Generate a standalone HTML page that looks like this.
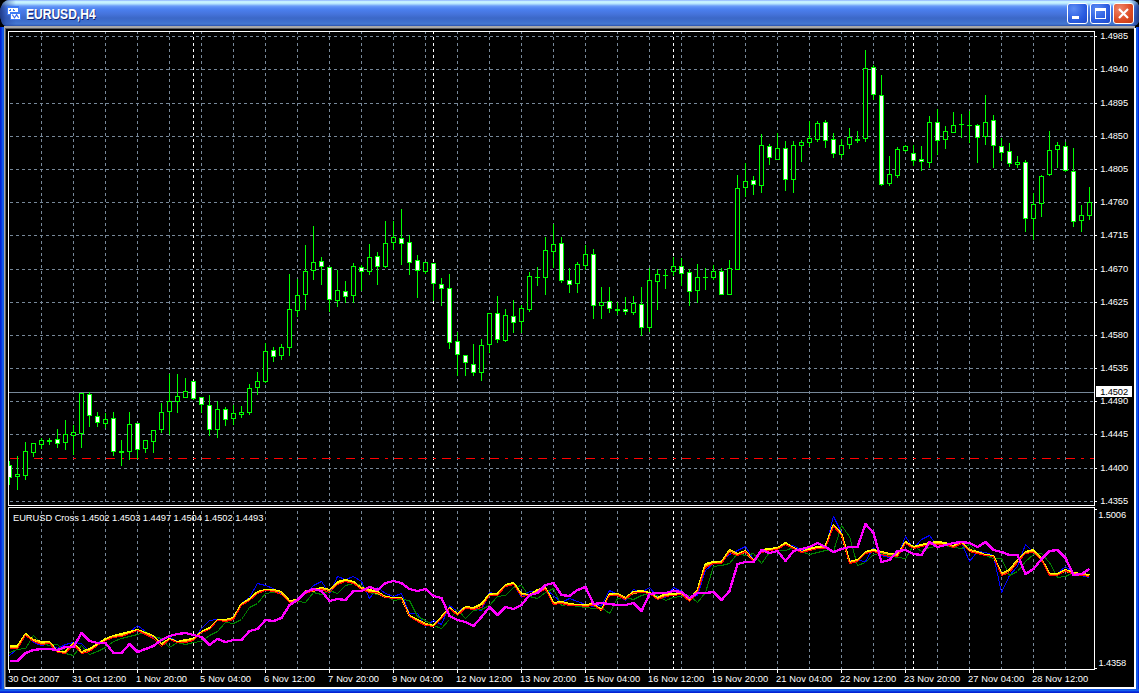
<!DOCTYPE html>
<html><head><meta charset="utf-8"><title>EURUSD,H4</title>
<style>
html,body{margin:0;padding:0;background:#000;}
body{width:1139px;height:693px;overflow:hidden;position:relative;font-family:"Liberation Sans",Arial,sans-serif;}
#win{position:absolute;left:0;top:0;width:1139px;height:693px;background:#000;overflow:hidden;}
#tb{position:absolute;left:0;top:0;width:1139px;height:26px;overflow:hidden;border-radius:9px 8px 6px 6px / 13px 8px 6px 13px;
 background:linear-gradient(to bottom,#8AAEFF 0px,#C4F0FF 1.5px,#C8F4FF 3px,#9CCCFC 4.5px,#6A9CF8 6px,#5388F2 8px,#4A7EEC 10px,#4674DC 14px,#3C68C8 18px,#3E6ECC 21px,#4478D2 24px,#3A66C0 25px,#2850A8 26px);}
#title{position:absolute;left:26px;top:6px;color:#fff;font-weight:bold;font-size:14px;line-height:16px;white-space:nowrap;
 text-shadow:1px 1px 0 #10206A;transform-origin:0 0;transform:scaleX(0.86);letter-spacing:0px;}
.bl{position:absolute;background:linear-gradient(to right,#0019CF,#0A38DE 40%,#166AEE 75%,#0A48DC);}
.btn{position:absolute;top:3px;width:21px;height:21px;border-radius:3px;box-sizing:border-box;border:1px solid #fff;
 background:radial-gradient(circle at 30% 25%,#5C8CF4,#2A5CE0 60%,#1E48C8);}
#bc{background:radial-gradient(circle at 30% 25%,#F0866A,#DC4A22 60%,#C03A14);}
</style></head><body>
<div id="win">
 <div id="tb"><div style="position:absolute;left:0;top:0;width:16px;height:26px;background:linear-gradient(to right,rgba(24,48,120,.85),rgba(36,70,160,.5) 6px,rgba(60,100,200,0) 16px)"></div><div style="position:absolute;right:0;top:0;width:10px;height:26px;background:linear-gradient(to left,rgba(24,48,120,.85),rgba(36,70,160,.4) 5px,rgba(60,100,200,0) 10px)"></div></div>
 <!-- frame borders -->
 <div class="bl" style="left:0;top:27px;width:4px;height:666px"></div>
 <div class="bl" style="left:1136px;top:27px;width:3px;height:666px;background:linear-gradient(to right,#0A48DC,#166AEE 40%,#0A38DE 70%,#0019CF)"></div>
 <div style="position:absolute;left:0;top:689px;width:1139px;height:4px;background:linear-gradient(to bottom,#0A48DC,#166AEE 30%,#0A38DE 60%,#0019CF)"></div>
 <!-- client edge -->
 <div style="position:absolute;left:4px;top:26px;width:1131px;height:2px;background:#A9A9A9"></div>
 <div style="position:absolute;left:5px;top:28px;width:1129px;height:1px;background:#5C5C5C"></div>
 <div style="position:absolute;left:4px;top:26px;width:1px;height:663px;background:#A9A9A9"></div>
 <div style="position:absolute;left:5px;top:28px;width:1px;height:660px;background:#5C5C5C"></div>
 <div style="position:absolute;left:1134px;top:28px;width:2px;height:661px;background:#FFFFFF"></div>
 <div style="position:absolute;left:5px;top:687px;width:1131px;height:2px;background:#FFFFFF"></div>
 <!-- icon -->
 <svg style="position:absolute;left:7px;top:6px" width="15" height="15" viewBox="0 0 15 15">
  <g shape-rendering="crispEdges">
  <rect x="0" y="0" width="12" height="9" fill="#3F7CF4"/>
  <rect x="1" y="2" width="10" height="6" fill="#FFFFFF"/>
  <rect x="2" y="4" width="2" height="1" fill="#3F7CF4"/><rect x="3" y="3" width="1" height="1" fill="#3F7CF4"/>
  <rect x="6" y="3" width="1" height="2" fill="#3F7CF4"/><rect x="7" y="4" width="1" height="1" fill="#3F7CF4"/>
  <rect x="3" y="6" width="11" height="8" fill="#3F7CF4"/>
  <rect x="4" y="8" width="9" height="5" fill="#FFFFFF"/>
  </g>
  <polyline points="5.3,8.6 7.5,11.8 9.6,8.6 11.6,11.8" fill="none" stroke="#3A6CF0" stroke-width="1.1"/>
 </svg>
 <div id="title">EURUSD,H4</div>
 <div class="btn" style="left:1067px"><div style="position:absolute;left:4px;top:12px;width:7px;height:3px;background:#fff"></div></div>
 <div class="btn" style="left:1090px"><div style="position:absolute;left:4px;top:4px;width:9px;height:7px;border:1px solid #fff;border-top-width:3px"></div></div>
 <div class="btn" id="bc" style="left:1113px"><svg width="19" height="19" viewBox="0 0 19 19" style="position:absolute;left:0;top:0"><path d="M5 5l9 9M14 5l-9 9" stroke="#fff" stroke-width="2.2" fill="none"/></svg></div>
 <svg style="position:absolute;left:0;top:0" width="1139" height="693" viewBox="0 0 1139 693">
<g shape-rendering="crispEdges" fill="none">
<line x1="41.5" y1="32" x2="41.5" y2="34" stroke="#778899"/><line x1="41.5" y1="37" x2="41.5" y2="505" stroke="#778899" stroke-dasharray="3 3"/>
<line x1="41.5" y1="511" x2="41.5" y2="669" stroke="#778899" stroke-dasharray="3 3"/>
<line x1="73.5" y1="32" x2="73.5" y2="34" stroke="#778899"/><line x1="73.5" y1="37" x2="73.5" y2="505" stroke="#778899" stroke-dasharray="3 3"/>
<line x1="73.5" y1="511" x2="73.5" y2="669" stroke="#778899" stroke-dasharray="3 3"/>
<line x1="105.5" y1="32" x2="105.5" y2="34" stroke="#778899"/><line x1="105.5" y1="37" x2="105.5" y2="505" stroke="#778899" stroke-dasharray="3 3"/>
<line x1="105.5" y1="511" x2="105.5" y2="669" stroke="#778899" stroke-dasharray="3 3"/>
<line x1="137.5" y1="32" x2="137.5" y2="34" stroke="#778899"/><line x1="137.5" y1="37" x2="137.5" y2="505" stroke="#778899" stroke-dasharray="3 3"/>
<line x1="137.5" y1="511" x2="137.5" y2="669" stroke="#778899" stroke-dasharray="3 3"/>
<line x1="169.5" y1="32" x2="169.5" y2="34" stroke="#778899"/><line x1="169.5" y1="37" x2="169.5" y2="505" stroke="#778899" stroke-dasharray="3 3"/>
<line x1="169.5" y1="511" x2="169.5" y2="669" stroke="#778899" stroke-dasharray="3 3"/>
<line x1="201.5" y1="32" x2="201.5" y2="34" stroke="#778899"/><line x1="201.5" y1="37" x2="201.5" y2="505" stroke="#778899" stroke-dasharray="3 3"/>
<line x1="201.5" y1="511" x2="201.5" y2="669" stroke="#778899" stroke-dasharray="3 3"/>
<line x1="233.5" y1="32" x2="233.5" y2="34" stroke="#778899"/><line x1="233.5" y1="37" x2="233.5" y2="505" stroke="#778899" stroke-dasharray="3 3"/>
<line x1="233.5" y1="511" x2="233.5" y2="669" stroke="#778899" stroke-dasharray="3 3"/>
<line x1="265.5" y1="32" x2="265.5" y2="34" stroke="#778899"/><line x1="265.5" y1="37" x2="265.5" y2="505" stroke="#778899" stroke-dasharray="3 3"/>
<line x1="265.5" y1="511" x2="265.5" y2="669" stroke="#778899" stroke-dasharray="3 3"/>
<line x1="297.5" y1="32" x2="297.5" y2="34" stroke="#778899"/><line x1="297.5" y1="37" x2="297.5" y2="505" stroke="#778899" stroke-dasharray="3 3"/>
<line x1="297.5" y1="511" x2="297.5" y2="669" stroke="#778899" stroke-dasharray="3 3"/>
<line x1="329.5" y1="32" x2="329.5" y2="34" stroke="#778899"/><line x1="329.5" y1="37" x2="329.5" y2="505" stroke="#778899" stroke-dasharray="3 3"/>
<line x1="329.5" y1="511" x2="329.5" y2="669" stroke="#778899" stroke-dasharray="3 3"/>
<line x1="361.5" y1="32" x2="361.5" y2="34" stroke="#778899"/><line x1="361.5" y1="37" x2="361.5" y2="505" stroke="#778899" stroke-dasharray="3 3"/>
<line x1="361.5" y1="511" x2="361.5" y2="669" stroke="#778899" stroke-dasharray="3 3"/>
<line x1="393.5" y1="32" x2="393.5" y2="34" stroke="#778899"/><line x1="393.5" y1="37" x2="393.5" y2="505" stroke="#778899" stroke-dasharray="3 3"/>
<line x1="393.5" y1="511" x2="393.5" y2="669" stroke="#778899" stroke-dasharray="3 3"/>
<line x1="425.5" y1="32" x2="425.5" y2="34" stroke="#778899"/><line x1="425.5" y1="37" x2="425.5" y2="505" stroke="#778899" stroke-dasharray="3 3"/>
<line x1="425.5" y1="511" x2="425.5" y2="669" stroke="#778899" stroke-dasharray="3 3"/>
<line x1="457.5" y1="32" x2="457.5" y2="34" stroke="#778899"/><line x1="457.5" y1="37" x2="457.5" y2="505" stroke="#778899" stroke-dasharray="3 3"/>
<line x1="457.5" y1="511" x2="457.5" y2="669" stroke="#778899" stroke-dasharray="3 3"/>
<line x1="489.5" y1="32" x2="489.5" y2="34" stroke="#778899"/><line x1="489.5" y1="37" x2="489.5" y2="505" stroke="#778899" stroke-dasharray="3 3"/>
<line x1="489.5" y1="511" x2="489.5" y2="669" stroke="#778899" stroke-dasharray="3 3"/>
<line x1="521.5" y1="32" x2="521.5" y2="34" stroke="#778899"/><line x1="521.5" y1="37" x2="521.5" y2="505" stroke="#778899" stroke-dasharray="3 3"/>
<line x1="521.5" y1="511" x2="521.5" y2="669" stroke="#778899" stroke-dasharray="3 3"/>
<line x1="553.5" y1="32" x2="553.5" y2="34" stroke="#778899"/><line x1="553.5" y1="37" x2="553.5" y2="505" stroke="#778899" stroke-dasharray="3 3"/>
<line x1="553.5" y1="511" x2="553.5" y2="669" stroke="#778899" stroke-dasharray="3 3"/>
<line x1="585.5" y1="32" x2="585.5" y2="34" stroke="#778899"/><line x1="585.5" y1="37" x2="585.5" y2="505" stroke="#778899" stroke-dasharray="3 3"/>
<line x1="585.5" y1="511" x2="585.5" y2="669" stroke="#778899" stroke-dasharray="3 3"/>
<line x1="617.5" y1="32" x2="617.5" y2="34" stroke="#778899"/><line x1="617.5" y1="37" x2="617.5" y2="505" stroke="#778899" stroke-dasharray="3 3"/>
<line x1="617.5" y1="511" x2="617.5" y2="669" stroke="#778899" stroke-dasharray="3 3"/>
<line x1="649.5" y1="32" x2="649.5" y2="34" stroke="#778899"/><line x1="649.5" y1="37" x2="649.5" y2="505" stroke="#778899" stroke-dasharray="3 3"/>
<line x1="649.5" y1="511" x2="649.5" y2="669" stroke="#778899" stroke-dasharray="3 3"/>
<line x1="681.5" y1="32" x2="681.5" y2="34" stroke="#778899"/><line x1="681.5" y1="37" x2="681.5" y2="505" stroke="#778899" stroke-dasharray="3 3"/>
<line x1="681.5" y1="511" x2="681.5" y2="669" stroke="#778899" stroke-dasharray="3 3"/>
<line x1="713.5" y1="32" x2="713.5" y2="34" stroke="#778899"/><line x1="713.5" y1="37" x2="713.5" y2="505" stroke="#778899" stroke-dasharray="3 3"/>
<line x1="713.5" y1="511" x2="713.5" y2="669" stroke="#778899" stroke-dasharray="3 3"/>
<line x1="745.5" y1="32" x2="745.5" y2="34" stroke="#778899"/><line x1="745.5" y1="37" x2="745.5" y2="505" stroke="#778899" stroke-dasharray="3 3"/>
<line x1="745.5" y1="511" x2="745.5" y2="669" stroke="#778899" stroke-dasharray="3 3"/>
<line x1="777.5" y1="32" x2="777.5" y2="34" stroke="#778899"/><line x1="777.5" y1="37" x2="777.5" y2="505" stroke="#778899" stroke-dasharray="3 3"/>
<line x1="777.5" y1="511" x2="777.5" y2="669" stroke="#778899" stroke-dasharray="3 3"/>
<line x1="809.5" y1="32" x2="809.5" y2="34" stroke="#778899"/><line x1="809.5" y1="37" x2="809.5" y2="505" stroke="#778899" stroke-dasharray="3 3"/>
<line x1="809.5" y1="511" x2="809.5" y2="669" stroke="#778899" stroke-dasharray="3 3"/>
<line x1="841.5" y1="32" x2="841.5" y2="34" stroke="#778899"/><line x1="841.5" y1="37" x2="841.5" y2="505" stroke="#778899" stroke-dasharray="3 3"/>
<line x1="841.5" y1="511" x2="841.5" y2="669" stroke="#778899" stroke-dasharray="3 3"/>
<line x1="873.5" y1="32" x2="873.5" y2="34" stroke="#778899"/><line x1="873.5" y1="37" x2="873.5" y2="505" stroke="#778899" stroke-dasharray="3 3"/>
<line x1="873.5" y1="511" x2="873.5" y2="669" stroke="#778899" stroke-dasharray="3 3"/>
<line x1="905.5" y1="32" x2="905.5" y2="34" stroke="#778899"/><line x1="905.5" y1="37" x2="905.5" y2="505" stroke="#778899" stroke-dasharray="3 3"/>
<line x1="905.5" y1="511" x2="905.5" y2="669" stroke="#778899" stroke-dasharray="3 3"/>
<line x1="937.5" y1="32" x2="937.5" y2="34" stroke="#778899"/><line x1="937.5" y1="37" x2="937.5" y2="505" stroke="#778899" stroke-dasharray="3 3"/>
<line x1="937.5" y1="511" x2="937.5" y2="669" stroke="#778899" stroke-dasharray="3 3"/>
<line x1="969.5" y1="32" x2="969.5" y2="34" stroke="#778899"/><line x1="969.5" y1="37" x2="969.5" y2="505" stroke="#778899" stroke-dasharray="3 3"/>
<line x1="969.5" y1="511" x2="969.5" y2="669" stroke="#778899" stroke-dasharray="3 3"/>
<line x1="1001.5" y1="32" x2="1001.5" y2="34" stroke="#778899"/><line x1="1001.5" y1="37" x2="1001.5" y2="505" stroke="#778899" stroke-dasharray="3 3"/>
<line x1="1001.5" y1="511" x2="1001.5" y2="669" stroke="#778899" stroke-dasharray="3 3"/>
<line x1="1033.5" y1="32" x2="1033.5" y2="34" stroke="#778899"/><line x1="1033.5" y1="37" x2="1033.5" y2="505" stroke="#778899" stroke-dasharray="3 3"/>
<line x1="1033.5" y1="511" x2="1033.5" y2="669" stroke="#778899" stroke-dasharray="3 3"/>
<line x1="1065.5" y1="32" x2="1065.5" y2="34" stroke="#778899"/><line x1="1065.5" y1="37" x2="1065.5" y2="505" stroke="#778899" stroke-dasharray="3 3"/>
<line x1="1065.5" y1="511" x2="1065.5" y2="669" stroke="#778899" stroke-dasharray="3 3"/>
<line x1="10" y1="36.5" x2="1094" y2="36.5" stroke="#778899" stroke-dasharray="3 3"/>
<line x1="10" y1="69.5" x2="1094" y2="69.5" stroke="#778899" stroke-dasharray="3 3"/>
<line x1="10" y1="103.5" x2="1094" y2="103.5" stroke="#778899" stroke-dasharray="3 3"/>
<line x1="10" y1="136.5" x2="1094" y2="136.5" stroke="#778899" stroke-dasharray="3 3"/>
<line x1="10" y1="169.5" x2="1094" y2="169.5" stroke="#778899" stroke-dasharray="3 3"/>
<line x1="10" y1="202.5" x2="1094" y2="202.5" stroke="#778899" stroke-dasharray="3 3"/>
<line x1="10" y1="235.5" x2="1094" y2="235.5" stroke="#778899" stroke-dasharray="3 3"/>
<line x1="10" y1="269.5" x2="1094" y2="269.5" stroke="#778899" stroke-dasharray="3 3"/>
<line x1="10" y1="302.5" x2="1094" y2="302.5" stroke="#778899" stroke-dasharray="3 3"/>
<line x1="10" y1="335.5" x2="1094" y2="335.5" stroke="#778899" stroke-dasharray="3 3"/>
<line x1="10" y1="368.5" x2="1094" y2="368.5" stroke="#778899" stroke-dasharray="3 3"/>
<line x1="10" y1="401.5" x2="1094" y2="401.5" stroke="#778899" stroke-dasharray="3 3"/>
<line x1="10" y1="434.5" x2="1094" y2="434.5" stroke="#778899" stroke-dasharray="3 3"/>
<line x1="10" y1="468.5" x2="1094" y2="468.5" stroke="#778899" stroke-dasharray="3 3"/>
<line x1="10" y1="501.5" x2="1094" y2="501.5" stroke="#778899" stroke-dasharray="3 3"/>
<line x1="193.5" y1="32" x2="193.5" y2="34" stroke="#FFFFFF"/><line x1="193.5" y1="37" x2="193.5" y2="505" stroke="#FFFFFF" stroke-dasharray="3 3"/>
<line x1="193.5" y1="511" x2="193.5" y2="669" stroke="#FFFFFF" stroke-dasharray="3 3"/>
<line x1="433.5" y1="32" x2="433.5" y2="34" stroke="#FFFFFF"/><line x1="433.5" y1="37" x2="433.5" y2="505" stroke="#FFFFFF" stroke-dasharray="3 3"/>
<line x1="433.5" y1="511" x2="433.5" y2="669" stroke="#FFFFFF" stroke-dasharray="3 3"/>
<line x1="673.5" y1="32" x2="673.5" y2="34" stroke="#FFFFFF"/><line x1="673.5" y1="37" x2="673.5" y2="505" stroke="#FFFFFF" stroke-dasharray="3 3"/>
<line x1="673.5" y1="511" x2="673.5" y2="669" stroke="#FFFFFF" stroke-dasharray="3 3"/>
<line x1="913.5" y1="32" x2="913.5" y2="34" stroke="#FFFFFF"/><line x1="913.5" y1="37" x2="913.5" y2="505" stroke="#FFFFFF" stroke-dasharray="3 3"/>
<line x1="913.5" y1="511" x2="913.5" y2="669" stroke="#FFFFFF" stroke-dasharray="3 3"/>
<line x1="10" y1="458.5" x2="1094" y2="458.5" stroke="#FF0000" stroke-dasharray="9 6 3 6"/>
<line x1="9" y1="392.5" x2="1094" y2="392.5" stroke="#778899"/>
<svg x="9" y="32" width="1085" height="473" viewBox="9 32 1085 473" overflow="hidden">
<line x1="9.5" y1="461" x2="9.5" y2="485" stroke="#00FF00"/>
<rect x="7.5" y="465.5" width="4" height="12" fill="#FFFFFF" stroke="#00FF00"/>
<line x1="17.5" y1="456" x2="17.5" y2="490" stroke="#00FF00"/>
<rect x="15.5" y="474.5" width="4" height="2" fill="#000000" stroke="#00FF00"/>
<line x1="25.5" y1="442" x2="25.5" y2="480" stroke="#00FF00"/>
<rect x="23.5" y="451.5" width="4" height="24" fill="#000000" stroke="#00FF00"/>
<line x1="33.5" y1="443" x2="33.5" y2="457" stroke="#00FF00"/>
<rect x="31.5" y="443.5" width="4" height="9" fill="#000000" stroke="#00FF00"/>
<line x1="41.5" y1="438" x2="41.5" y2="449" stroke="#00FF00"/>
<rect x="39.5" y="440.5" width="4" height="4" fill="#000000" stroke="#00FF00"/>
<line x1="49.5" y1="438" x2="49.5" y2="445" stroke="#00FF00"/>
<rect x="47" y="440" width="5" height="2" fill="#00FF00" stroke="none"/>
<line x1="57.5" y1="429" x2="57.5" y2="448" stroke="#00FF00"/>
<rect x="55.5" y="439.5" width="4" height="4" fill="#FFFFFF" stroke="#00FF00"/>
<line x1="65.5" y1="420" x2="65.5" y2="450" stroke="#00FF00"/>
<rect x="63.5" y="434.5" width="4" height="8" fill="#000000" stroke="#00FF00"/>
<line x1="73.5" y1="425" x2="73.5" y2="455" stroke="#00FF00"/>
<rect x="71.5" y="432.5" width="4" height="3" fill="#000000" stroke="#00FF00"/>
<line x1="81.5" y1="393" x2="81.5" y2="448" stroke="#00FF00"/>
<rect x="79.5" y="393.5" width="4" height="40" fill="#000000" stroke="#00FF00"/>
<line x1="89.5" y1="392" x2="89.5" y2="427" stroke="#00FF00"/>
<rect x="87.5" y="394.5" width="4" height="21" fill="#FFFFFF" stroke="#00FF00"/>
<line x1="97.5" y1="412" x2="97.5" y2="427" stroke="#00FF00"/>
<rect x="95.5" y="416.5" width="4" height="6" fill="#FFFFFF" stroke="#00FF00"/>
<line x1="105.5" y1="413" x2="105.5" y2="428" stroke="#00FF00"/>
<rect x="103.5" y="419.5" width="4" height="4" fill="#000000" stroke="#00FF00"/>
<line x1="113.5" y1="412" x2="113.5" y2="456" stroke="#00FF00"/>
<rect x="111.5" y="418.5" width="4" height="33" fill="#FFFFFF" stroke="#00FF00"/>
<line x1="121.5" y1="440" x2="121.5" y2="466" stroke="#00FF00"/>
<rect x="119" y="451" width="5" height="2" fill="#00FF00" stroke="none"/>
<line x1="129.5" y1="412" x2="129.5" y2="460" stroke="#00FF00"/>
<rect x="127.5" y="424.5" width="4" height="27" fill="#000000" stroke="#00FF00"/>
<line x1="137.5" y1="423" x2="137.5" y2="459" stroke="#00FF00"/>
<rect x="135.5" y="423.5" width="4" height="26" fill="#FFFFFF" stroke="#00FF00"/>
<line x1="145.5" y1="440" x2="145.5" y2="453" stroke="#00FF00"/>
<rect x="143.5" y="440.5" width="4" height="8" fill="#000000" stroke="#00FF00"/>
<line x1="153.5" y1="430" x2="153.5" y2="453" stroke="#00FF00"/>
<rect x="151.5" y="430.5" width="4" height="11" fill="#000000" stroke="#00FF00"/>
<line x1="161.5" y1="403" x2="161.5" y2="433" stroke="#00FF00"/>
<rect x="159.5" y="412.5" width="4" height="17" fill="#000000" stroke="#00FF00"/>
<line x1="169.5" y1="374" x2="169.5" y2="435" stroke="#00FF00"/>
<rect x="167.5" y="401.5" width="4" height="10" fill="#000000" stroke="#00FF00"/>
<line x1="177.5" y1="374" x2="177.5" y2="413" stroke="#00FF00"/>
<rect x="175.5" y="396.5" width="4" height="5" fill="#000000" stroke="#00FF00"/>
<line x1="185.5" y1="378" x2="185.5" y2="398" stroke="#00FF00"/>
<rect x="183.5" y="391.5" width="4" height="6" fill="#000000" stroke="#00FF00"/>
<line x1="193.5" y1="381" x2="193.5" y2="400" stroke="#00FF00"/>
<rect x="191.5" y="381.5" width="4" height="17" fill="#FFFFFF" stroke="#00FF00"/>
<line x1="201.5" y1="397" x2="201.5" y2="413" stroke="#00FF00"/>
<rect x="199.5" y="397.5" width="4" height="7" fill="#FFFFFF" stroke="#00FF00"/>
<line x1="209.5" y1="395" x2="209.5" y2="436" stroke="#00FF00"/>
<rect x="207.5" y="405.5" width="4" height="24" fill="#FFFFFF" stroke="#00FF00"/>
<line x1="217.5" y1="401" x2="217.5" y2="438" stroke="#00FF00"/>
<rect x="215.5" y="409.5" width="4" height="20" fill="#000000" stroke="#00FF00"/>
<line x1="225.5" y1="407" x2="225.5" y2="426" stroke="#00FF00"/>
<rect x="223.5" y="409.5" width="4" height="10" fill="#FFFFFF" stroke="#00FF00"/>
<line x1="233.5" y1="405" x2="233.5" y2="425" stroke="#00FF00"/>
<rect x="231.5" y="413.5" width="4" height="5" fill="#000000" stroke="#00FF00"/>
<line x1="241.5" y1="406" x2="241.5" y2="418" stroke="#00FF00"/>
<rect x="239.5" y="412.5" width="4" height="2" fill="#000000" stroke="#00FF00"/>
<line x1="249.5" y1="384" x2="249.5" y2="415" stroke="#00FF00"/>
<rect x="247.5" y="388.5" width="4" height="24" fill="#000000" stroke="#00FF00"/>
<line x1="257.5" y1="372" x2="257.5" y2="395" stroke="#00FF00"/>
<rect x="255.5" y="381.5" width="4" height="6" fill="#000000" stroke="#00FF00"/>
<line x1="265.5" y1="343" x2="265.5" y2="383" stroke="#00FF00"/>
<rect x="263.5" y="351.5" width="4" height="30" fill="#000000" stroke="#00FF00"/>
<line x1="273.5" y1="347" x2="273.5" y2="362" stroke="#00FF00"/>
<rect x="271.5" y="350.5" width="4" height="6" fill="#FFFFFF" stroke="#00FF00"/>
<line x1="281.5" y1="344" x2="281.5" y2="360" stroke="#00FF00"/>
<rect x="279.5" y="347.5" width="4" height="8" fill="#000000" stroke="#00FF00"/>
<line x1="289.5" y1="274" x2="289.5" y2="356" stroke="#00FF00"/>
<rect x="287.5" y="309.5" width="4" height="38" fill="#000000" stroke="#00FF00"/>
<line x1="297.5" y1="279" x2="297.5" y2="317" stroke="#00FF00"/>
<rect x="295.5" y="295.5" width="4" height="15" fill="#000000" stroke="#00FF00"/>
<line x1="305.5" y1="245" x2="305.5" y2="310" stroke="#00FF00"/>
<rect x="303.5" y="271.5" width="4" height="23" fill="#000000" stroke="#00FF00"/>
<line x1="313.5" y1="226" x2="313.5" y2="280" stroke="#00FF00"/>
<rect x="311.5" y="262.5" width="4" height="8" fill="#000000" stroke="#00FF00"/>
<line x1="321.5" y1="257" x2="321.5" y2="285" stroke="#00FF00"/>
<rect x="319.5" y="261.5" width="4" height="5" fill="#FFFFFF" stroke="#00FF00"/>
<line x1="329.5" y1="267" x2="329.5" y2="312" stroke="#00FF00"/>
<rect x="327.5" y="267.5" width="4" height="32" fill="#FFFFFF" stroke="#00FF00"/>
<line x1="337.5" y1="270" x2="337.5" y2="307" stroke="#00FF00"/>
<rect x="335.5" y="290.5" width="4" height="10" fill="#000000" stroke="#00FF00"/>
<line x1="345.5" y1="281" x2="345.5" y2="303" stroke="#00FF00"/>
<rect x="343.5" y="291.5" width="4" height="5" fill="#FFFFFF" stroke="#00FF00"/>
<line x1="353.5" y1="263" x2="353.5" y2="303" stroke="#00FF00"/>
<rect x="351.5" y="266.5" width="4" height="29" fill="#000000" stroke="#00FF00"/>
<line x1="361.5" y1="265" x2="361.5" y2="291" stroke="#00FF00"/>
<rect x="359.5" y="267.5" width="4" height="4" fill="#FFFFFF" stroke="#00FF00"/>
<line x1="369.5" y1="244" x2="369.5" y2="275" stroke="#00FF00"/>
<rect x="367.5" y="257.5" width="4" height="14" fill="#000000" stroke="#00FF00"/>
<line x1="377.5" y1="252" x2="377.5" y2="285" stroke="#00FF00"/>
<rect x="375.5" y="256.5" width="4" height="10" fill="#FFFFFF" stroke="#00FF00"/>
<line x1="385.5" y1="221" x2="385.5" y2="268" stroke="#00FF00"/>
<rect x="383.5" y="243.5" width="4" height="23" fill="#000000" stroke="#00FF00"/>
<line x1="393.5" y1="221" x2="393.5" y2="250" stroke="#00FF00"/>
<rect x="391.5" y="237.5" width="4" height="5" fill="#000000" stroke="#00FF00"/>
<line x1="401.5" y1="209" x2="401.5" y2="265" stroke="#00FF00"/>
<rect x="399.5" y="238.5" width="4" height="5" fill="#FFFFFF" stroke="#00FF00"/>
<line x1="409.5" y1="235" x2="409.5" y2="275" stroke="#00FF00"/>
<rect x="407.5" y="242.5" width="4" height="20" fill="#FFFFFF" stroke="#00FF00"/>
<line x1="417.5" y1="255" x2="417.5" y2="298" stroke="#00FF00"/>
<rect x="415.5" y="260.5" width="4" height="10" fill="#FFFFFF" stroke="#00FF00"/>
<line x1="425.5" y1="262" x2="425.5" y2="274" stroke="#00FF00"/>
<rect x="423.5" y="262.5" width="4" height="9" fill="#000000" stroke="#00FF00"/>
<line x1="433.5" y1="263" x2="433.5" y2="301" stroke="#00FF00"/>
<rect x="431.5" y="263.5" width="4" height="20" fill="#FFFFFF" stroke="#00FF00"/>
<line x1="441.5" y1="278" x2="441.5" y2="306" stroke="#00FF00"/>
<rect x="439.5" y="284.5" width="4" height="4" fill="#FFFFFF" stroke="#00FF00"/>
<line x1="449.5" y1="274" x2="449.5" y2="349" stroke="#00FF00"/>
<rect x="447.5" y="288.5" width="4" height="54" fill="#FFFFFF" stroke="#00FF00"/>
<line x1="457.5" y1="332" x2="457.5" y2="376" stroke="#00FF00"/>
<rect x="455.5" y="341.5" width="4" height="13" fill="#FFFFFF" stroke="#00FF00"/>
<line x1="465.5" y1="355" x2="465.5" y2="376" stroke="#00FF00"/>
<rect x="463.5" y="355.5" width="4" height="7" fill="#FFFFFF" stroke="#00FF00"/>
<line x1="473.5" y1="344" x2="473.5" y2="376" stroke="#00FF00"/>
<rect x="471.5" y="364.5" width="4" height="8" fill="#FFFFFF" stroke="#00FF00"/>
<line x1="481.5" y1="339" x2="481.5" y2="381" stroke="#00FF00"/>
<rect x="479.5" y="345.5" width="4" height="27" fill="#000000" stroke="#00FF00"/>
<line x1="489.5" y1="313" x2="489.5" y2="353" stroke="#00FF00"/>
<rect x="487.5" y="313.5" width="4" height="31" fill="#000000" stroke="#00FF00"/>
<line x1="497.5" y1="296" x2="497.5" y2="343" stroke="#00FF00"/>
<rect x="495.5" y="313.5" width="4" height="26" fill="#FFFFFF" stroke="#00FF00"/>
<line x1="505.5" y1="309" x2="505.5" y2="342" stroke="#00FF00"/>
<rect x="503.5" y="315.5" width="4" height="25" fill="#000000" stroke="#00FF00"/>
<line x1="513.5" y1="300" x2="513.5" y2="333" stroke="#00FF00"/>
<rect x="511.5" y="316.5" width="4" height="6" fill="#FFFFFF" stroke="#00FF00"/>
<line x1="521.5" y1="305" x2="521.5" y2="333" stroke="#00FF00"/>
<rect x="519.5" y="308.5" width="4" height="13" fill="#000000" stroke="#00FF00"/>
<line x1="529.5" y1="272" x2="529.5" y2="312" stroke="#00FF00"/>
<rect x="527.5" y="276.5" width="4" height="33" fill="#000000" stroke="#00FF00"/>
<line x1="537.5" y1="267" x2="537.5" y2="286" stroke="#00FF00"/>
<line x1="535" y1="277.5" x2="540" y2="277.5" stroke="#00FF00"/>
<line x1="545.5" y1="237" x2="545.5" y2="295" stroke="#00FF00"/>
<rect x="543.5" y="250.5" width="4" height="27" fill="#000000" stroke="#00FF00"/>
<line x1="553.5" y1="224" x2="553.5" y2="268" stroke="#00FF00"/>
<rect x="551.5" y="244.5" width="4" height="7" fill="#000000" stroke="#00FF00"/>
<line x1="561.5" y1="237" x2="561.5" y2="283" stroke="#00FF00"/>
<rect x="559.5" y="243.5" width="4" height="37" fill="#FFFFFF" stroke="#00FF00"/>
<line x1="569.5" y1="268" x2="569.5" y2="293" stroke="#00FF00"/>
<rect x="567.5" y="280.5" width="4" height="4" fill="#FFFFFF" stroke="#00FF00"/>
<line x1="577.5" y1="262" x2="577.5" y2="293" stroke="#00FF00"/>
<rect x="575.5" y="264.5" width="4" height="19" fill="#000000" stroke="#00FF00"/>
<line x1="585.5" y1="245" x2="585.5" y2="270" stroke="#00FF00"/>
<rect x="583.5" y="254.5" width="4" height="11" fill="#000000" stroke="#00FF00"/>
<line x1="593.5" y1="249" x2="593.5" y2="319" stroke="#00FF00"/>
<rect x="591.5" y="254.5" width="4" height="51" fill="#FFFFFF" stroke="#00FF00"/>
<line x1="601.5" y1="287" x2="601.5" y2="319" stroke="#00FF00"/>
<rect x="599.5" y="302.5" width="4" height="3" fill="#000000" stroke="#00FF00"/>
<line x1="609.5" y1="287" x2="609.5" y2="313" stroke="#00FF00"/>
<rect x="607.5" y="301.5" width="4" height="7" fill="#FFFFFF" stroke="#00FF00"/>
<line x1="617.5" y1="302" x2="617.5" y2="315" stroke="#00FF00"/>
<rect x="615" y="309" width="5" height="2" fill="#00FF00" stroke="none"/>
<line x1="625.5" y1="297" x2="625.5" y2="315" stroke="#00FF00"/>
<rect x="623.5" y="309.5" width="4" height="2" fill="#FFFFFF" stroke="#00FF00"/>
<line x1="633.5" y1="296" x2="633.5" y2="315" stroke="#00FF00"/>
<rect x="631.5" y="303.5" width="4" height="9" fill="#000000" stroke="#00FF00"/>
<line x1="641.5" y1="287" x2="641.5" y2="336" stroke="#00FF00"/>
<rect x="639.5" y="304.5" width="4" height="23" fill="#FFFFFF" stroke="#00FF00"/>
<line x1="649.5" y1="268" x2="649.5" y2="332" stroke="#00FF00"/>
<rect x="647.5" y="280.5" width="4" height="47" fill="#000000" stroke="#00FF00"/>
<line x1="657.5" y1="269" x2="657.5" y2="310" stroke="#00FF00"/>
<rect x="655.5" y="274.5" width="4" height="7" fill="#000000" stroke="#00FF00"/>
<line x1="665.5" y1="269" x2="665.5" y2="289" stroke="#00FF00"/>
<line x1="663" y1="275.5" x2="668" y2="275.5" stroke="#00FF00"/>
<line x1="673.5" y1="257" x2="673.5" y2="276" stroke="#00FF00"/>
<rect x="671.5" y="266.5" width="4" height="5" fill="#000000" stroke="#00FF00"/>
<line x1="681.5" y1="258" x2="681.5" y2="286" stroke="#00FF00"/>
<rect x="679.5" y="266.5" width="4" height="7" fill="#FFFFFF" stroke="#00FF00"/>
<line x1="689.5" y1="269" x2="689.5" y2="306" stroke="#00FF00"/>
<rect x="687.5" y="272.5" width="4" height="19" fill="#FFFFFF" stroke="#00FF00"/>
<line x1="697.5" y1="264" x2="697.5" y2="303" stroke="#00FF00"/>
<rect x="695.5" y="277.5" width="4" height="13" fill="#000000" stroke="#00FF00"/>
<line x1="705.5" y1="268" x2="705.5" y2="290" stroke="#00FF00"/>
<line x1="703" y1="277.5" x2="708" y2="277.5" stroke="#00FF00"/>
<line x1="713.5" y1="265" x2="713.5" y2="280" stroke="#00FF00"/>
<rect x="711.5" y="271.5" width="4" height="6" fill="#000000" stroke="#00FF00"/>
<line x1="721.5" y1="268" x2="721.5" y2="295" stroke="#00FF00"/>
<rect x="719.5" y="271.5" width="4" height="23" fill="#FFFFFF" stroke="#00FF00"/>
<line x1="729.5" y1="260" x2="729.5" y2="295" stroke="#00FF00"/>
<rect x="727.5" y="268.5" width="4" height="26" fill="#000000" stroke="#00FF00"/>
<line x1="737.5" y1="175" x2="737.5" y2="270" stroke="#00FF00"/>
<rect x="735.5" y="188.5" width="4" height="81" fill="#000000" stroke="#00FF00"/>
<line x1="745.5" y1="163" x2="745.5" y2="197" stroke="#00FF00"/>
<rect x="743.5" y="181.5" width="4" height="6" fill="#000000" stroke="#00FF00"/>
<line x1="753.5" y1="176" x2="753.5" y2="195" stroke="#00FF00"/>
<rect x="751.5" y="180.5" width="4" height="4" fill="#FFFFFF" stroke="#00FF00"/>
<line x1="761.5" y1="134" x2="761.5" y2="193" stroke="#00FF00"/>
<rect x="759.5" y="145.5" width="4" height="40" fill="#000000" stroke="#00FF00"/>
<line x1="769.5" y1="144" x2="769.5" y2="165" stroke="#00FF00"/>
<rect x="767.5" y="146.5" width="4" height="11" fill="#FFFFFF" stroke="#00FF00"/>
<line x1="777.5" y1="133" x2="777.5" y2="160" stroke="#00FF00"/>
<rect x="775.5" y="148.5" width="4" height="11" fill="#000000" stroke="#00FF00"/>
<line x1="785.5" y1="141" x2="785.5" y2="191" stroke="#00FF00"/>
<rect x="783.5" y="148.5" width="4" height="31" fill="#FFFFFF" stroke="#00FF00"/>
<line x1="793.5" y1="141" x2="793.5" y2="193" stroke="#00FF00"/>
<rect x="791.5" y="145.5" width="4" height="34" fill="#000000" stroke="#00FF00"/>
<line x1="801.5" y1="140" x2="801.5" y2="162" stroke="#00FF00"/>
<rect x="799.5" y="142.5" width="4" height="3" fill="#000000" stroke="#00FF00"/>
<line x1="809.5" y1="121" x2="809.5" y2="147" stroke="#00FF00"/>
<rect x="807.5" y="138.5" width="4" height="4" fill="#000000" stroke="#00FF00"/>
<line x1="817.5" y1="121" x2="817.5" y2="142" stroke="#00FF00"/>
<rect x="815.5" y="123.5" width="4" height="16" fill="#000000" stroke="#00FF00"/>
<line x1="825.5" y1="120" x2="825.5" y2="148" stroke="#00FF00"/>
<rect x="823.5" y="122.5" width="4" height="18" fill="#FFFFFF" stroke="#00FF00"/>
<line x1="833.5" y1="133" x2="833.5" y2="158" stroke="#00FF00"/>
<rect x="831.5" y="139.5" width="4" height="14" fill="#FFFFFF" stroke="#00FF00"/>
<line x1="841.5" y1="139" x2="841.5" y2="158" stroke="#00FF00"/>
<rect x="839.5" y="145.5" width="4" height="9" fill="#000000" stroke="#00FF00"/>
<line x1="849.5" y1="128" x2="849.5" y2="149" stroke="#00FF00"/>
<rect x="847.5" y="137.5" width="4" height="7" fill="#000000" stroke="#00FF00"/>
<line x1="857.5" y1="131" x2="857.5" y2="143" stroke="#00FF00"/>
<rect x="855" y="139" width="5" height="2" fill="#00FF00" stroke="none"/>
<line x1="865.5" y1="50" x2="865.5" y2="142" stroke="#00FF00"/>
<rect x="863.5" y="68.5" width="4" height="70" fill="#000000" stroke="#00FF00"/>
<line x1="873.5" y1="65" x2="873.5" y2="100" stroke="#00FF00"/>
<rect x="871.5" y="67.5" width="4" height="27" fill="#FFFFFF" stroke="#00FF00"/>
<line x1="881.5" y1="75" x2="881.5" y2="186" stroke="#00FF00"/>
<rect x="879.5" y="95.5" width="4" height="89" fill="#FFFFFF" stroke="#00FF00"/>
<line x1="889.5" y1="156" x2="889.5" y2="186" stroke="#00FF00"/>
<rect x="887.5" y="174.5" width="4" height="9" fill="#000000" stroke="#00FF00"/>
<line x1="897.5" y1="147" x2="897.5" y2="178" stroke="#00FF00"/>
<rect x="895.5" y="149.5" width="4" height="26" fill="#000000" stroke="#00FF00"/>
<line x1="905.5" y1="145" x2="905.5" y2="152" stroke="#00FF00"/>
<rect x="903.5" y="146.5" width="4" height="4" fill="#000000" stroke="#00FF00"/>
<line x1="913.5" y1="145" x2="913.5" y2="166" stroke="#00FF00"/>
<rect x="911.5" y="153.5" width="4" height="7" fill="#FFFFFF" stroke="#00FF00"/>
<line x1="921.5" y1="146" x2="921.5" y2="171" stroke="#00FF00"/>
<rect x="919.5" y="159.5" width="4" height="2" fill="#FFFFFF" stroke="#00FF00"/>
<line x1="929.5" y1="116" x2="929.5" y2="168" stroke="#00FF00"/>
<rect x="927.5" y="122.5" width="4" height="40" fill="#000000" stroke="#00FF00"/>
<line x1="937.5" y1="109" x2="937.5" y2="155" stroke="#00FF00"/>
<rect x="935.5" y="122.5" width="4" height="18" fill="#FFFFFF" stroke="#00FF00"/>
<line x1="945.5" y1="126" x2="945.5" y2="149" stroke="#00FF00"/>
<rect x="943.5" y="131.5" width="4" height="8" fill="#000000" stroke="#00FF00"/>
<line x1="953.5" y1="112" x2="953.5" y2="133" stroke="#00FF00"/>
<rect x="951.5" y="125.5" width="4" height="7" fill="#000000" stroke="#00FF00"/>
<line x1="961.5" y1="114" x2="961.5" y2="138" stroke="#00FF00"/>
<line x1="959" y1="124.5" x2="964" y2="124.5" stroke="#00FF00"/>
<line x1="969.5" y1="111" x2="969.5" y2="143" stroke="#00FF00"/>
<line x1="967" y1="125.5" x2="972" y2="125.5" stroke="#00FF00"/>
<line x1="977.5" y1="124" x2="977.5" y2="163" stroke="#00FF00"/>
<rect x="975.5" y="125.5" width="4" height="12" fill="#FFFFFF" stroke="#00FF00"/>
<line x1="985.5" y1="95" x2="985.5" y2="145" stroke="#00FF00"/>
<rect x="983.5" y="122.5" width="4" height="14" fill="#000000" stroke="#00FF00"/>
<line x1="993.5" y1="115" x2="993.5" y2="168" stroke="#00FF00"/>
<rect x="991.5" y="120.5" width="4" height="25" fill="#FFFFFF" stroke="#00FF00"/>
<line x1="1001.5" y1="138" x2="1001.5" y2="161" stroke="#00FF00"/>
<rect x="999.5" y="146.5" width="4" height="6" fill="#FFFFFF" stroke="#00FF00"/>
<line x1="1009.5" y1="143" x2="1009.5" y2="167" stroke="#00FF00"/>
<rect x="1007.5" y="151.5" width="4" height="12" fill="#FFFFFF" stroke="#00FF00"/>
<line x1="1017.5" y1="156" x2="1017.5" y2="168" stroke="#00FF00"/>
<rect x="1015.5" y="162.5" width="4" height="2" fill="#000000" stroke="#00FF00"/>
<line x1="1025.5" y1="160" x2="1025.5" y2="232" stroke="#00FF00"/>
<rect x="1023.5" y="162.5" width="4" height="56" fill="#FFFFFF" stroke="#00FF00"/>
<line x1="1033.5" y1="193" x2="1033.5" y2="240" stroke="#00FF00"/>
<rect x="1031.5" y="204.5" width="4" height="14" fill="#000000" stroke="#00FF00"/>
<line x1="1041.5" y1="175" x2="1041.5" y2="217" stroke="#00FF00"/>
<rect x="1039.5" y="176.5" width="4" height="27" fill="#000000" stroke="#00FF00"/>
<line x1="1049.5" y1="131" x2="1049.5" y2="176" stroke="#00FF00"/>
<rect x="1047.5" y="150.5" width="4" height="24" fill="#000000" stroke="#00FF00"/>
<line x1="1057.5" y1="142" x2="1057.5" y2="168" stroke="#00FF00"/>
<rect x="1055.5" y="145.5" width="4" height="4" fill="#000000" stroke="#00FF00"/>
<line x1="1065.5" y1="142" x2="1065.5" y2="172" stroke="#00FF00"/>
<rect x="1063.5" y="146.5" width="4" height="24" fill="#FFFFFF" stroke="#00FF00"/>
<line x1="1073.5" y1="148" x2="1073.5" y2="227" stroke="#00FF00"/>
<rect x="1071.5" y="171.5" width="4" height="50" fill="#FFFFFF" stroke="#00FF00"/>
<line x1="1081.5" y1="205" x2="1081.5" y2="232" stroke="#00FF00"/>
<rect x="1079.5" y="215.5" width="4" height="5" fill="#000000" stroke="#00FF00"/>
<line x1="1089.5" y1="187" x2="1089.5" y2="220" stroke="#00FF00"/>
<rect x="1087.5" y="202.5" width="4" height="13" fill="#000000" stroke="#00FF00"/>
</svg>
</g>
<svg x="9" y="508" width="1085" height="161" viewBox="9 508 1085 161" overflow="hidden">
<polyline points="9.5,655.5 17.5,648.5 25.5,634.5 33.5,642.5 41.5,645.5 49.5,643.5 57.5,648.5 65.5,644.5 73.5,642.5 81.5,643.5 89.5,651.5 97.5,642.5 105.5,640.5 113.5,637.5 121.5,635.5 129.5,632.5 137.5,625.5 145.5,631.5 153.5,637.5 161.5,638.5 169.5,637.5 177.5,641.5 185.5,642.5 193.5,639.5 201.5,628.5 209.5,620.5 217.5,619.5 225.5,621.5 233.5,619.5 241.5,603.5 249.5,597.5 257.5,583.5 265.5,585.5 273.5,588.5 281.5,594.5 289.5,600.5 297.5,600.5 305.5,593.5 313.5,585.5 321.5,581.5 329.5,593.5 337.5,576.5 345.5,579.5 353.5,576.5 361.5,581.5 369.5,598.5 377.5,587.5 385.5,593.5 393.5,596.5 401.5,593.5 409.5,613.5 417.5,613.5 425.5,626.5 433.5,620.5 441.5,624.5 449.5,605.5 457.5,611.5 465.5,606.5 473.5,608.5 481.5,610.5 489.5,592.5 497.5,594.5 505.5,585.5 513.5,583.5 521.5,597.5 529.5,591.5 537.5,592.5 545.5,588.5 553.5,595.5 561.5,602.5 569.5,598.5 577.5,601.5 585.5,604.5 593.5,606.5 601.5,605.5 609.5,590.5 617.5,594.5 625.5,600.5 633.5,589.5 641.5,592.5 649.5,587.5 657.5,596.5 665.5,597.5 673.5,587.5 681.5,591.5 689.5,598.5 697.5,595.5 705.5,570.5 713.5,563.5 721.5,560.5 729.5,554.5 737.5,550.5 745.5,546.5 753.5,559.5 761.5,552.5 769.5,550.5 777.5,547.5 785.5,544.5 793.5,545.5 801.5,550.5 809.5,548.5 817.5,547.5 825.5,547.5 833.5,516.5 841.5,532.5 849.5,560.5 857.5,560.5 865.5,561.5 873.5,547.5 881.5,555.5 889.5,557.5 897.5,556.5 905.5,536.5 913.5,548.5 921.5,539.5 929.5,535.5 937.5,546.5 945.5,544.5 953.5,546.5 961.5,542.5 969.5,561.5 977.5,551.5 985.5,552.5 993.5,555.5 1001.5,592.5 1009.5,575.5 1017.5,566.5 1025.5,544.5 1033.5,552.5 1041.5,560.5 1049.5,573.5 1057.5,573.5 1065.5,566.5 1073.5,573.5 1081.5,575.5 1089.5,577.5" fill="none" stroke="#0000FF" stroke-width="1" stroke-linejoin="round" shape-rendering="crispEdges"/>
<polyline points="9.5,652.5 17.5,649.5 25.5,648.5 33.5,635.5 41.5,643.5 49.5,645.5 57.5,644.5 65.5,653.5 73.5,655.5 81.5,645.5 89.5,654.5 97.5,651.5 105.5,647.5 113.5,641.5 121.5,638.5 129.5,636.5 137.5,634.5 145.5,631.5 153.5,636.5 161.5,638.5 169.5,647.5 177.5,642.5 185.5,644.5 193.5,642.5 201.5,641.5 209.5,635.5 217.5,631.5 225.5,622.5 233.5,623.5 241.5,619.5 249.5,607.5 257.5,603.5 265.5,593.5 273.5,592.5 281.5,591.5 289.5,602.5 297.5,601.5 305.5,602.5 313.5,592.5 321.5,594.5 329.5,590.5 337.5,593.5 345.5,585.5 353.5,583.5 361.5,585.5 369.5,592.5 377.5,594.5 385.5,595.5 393.5,600.5 401.5,599.5 409.5,600.5 417.5,616.5 425.5,620.5 433.5,625.5 441.5,628.5 449.5,619.5 457.5,609.5 465.5,618.5 473.5,610.5 481.5,609.5 489.5,605.5 497.5,596.5 505.5,595.5 513.5,587.5 521.5,585.5 529.5,596.5 537.5,598.5 545.5,592.5 553.5,588.5 561.5,605.5 569.5,604.5 577.5,606.5 585.5,607.5 593.5,608.5 601.5,607.5 609.5,613.5 617.5,598.5 625.5,597.5 633.5,599.5 641.5,595.5 649.5,593.5 657.5,595.5 665.5,600.5 673.5,597.5 681.5,596.5 689.5,595.5 697.5,602.5 705.5,592.5 713.5,566.5 721.5,565.5 729.5,563.5 737.5,553.5 745.5,555.5 753.5,553.5 761.5,563.5 769.5,552.5 777.5,550.5 785.5,550.5 793.5,547.5 801.5,551.5 809.5,554.5 817.5,552.5 825.5,550.5 833.5,551.5 841.5,525.5 849.5,536.5 857.5,565.5 865.5,562.5 873.5,554.5 881.5,553.5 889.5,555.5 897.5,557.5 905.5,558.5 913.5,545.5 921.5,551.5 929.5,547.5 937.5,546.5 945.5,545.5 953.5,547.5 961.5,548.5 969.5,544.5 977.5,552.5 985.5,555.5 993.5,558.5 1001.5,558.5 1009.5,575.5 1017.5,571.5 1025.5,561.5 1033.5,554.5 1041.5,553.5 1049.5,562.5 1057.5,577.5 1065.5,576.5 1073.5,572.5 1081.5,574.5 1089.5,575.5" fill="none" stroke="#008000" stroke-width="1" stroke-linejoin="round" shape-rendering="crispEdges"/>
<polyline points="9.5,646 17.5,646 25.5,634 33.5,640 41.5,642 49.5,642 57.5,652 65.5,652 73.5,643 81.5,652 89.5,649 97.5,644 105.5,639 113.5,636 121.5,634 129.5,632 137.5,630 145.5,633 153.5,636 161.5,644 169.5,639 177.5,642 185.5,640 193.5,639 201.5,632 209.5,628 217.5,620 225.5,620 233.5,618 241.5,604 249.5,599 257.5,592 265.5,590 273.5,590 281.5,592 289.5,601 297.5,600 305.5,591 313.5,590 321.5,588 329.5,590 337.5,582 345.5,580 353.5,582 361.5,588 369.5,590 377.5,592 385.5,597 393.5,598 401.5,598 409.5,616 417.5,620 425.5,624 433.5,626 441.5,617 449.5,608 457.5,614 465.5,607 473.5,608 481.5,604 489.5,594 497.5,594 505.5,585 513.5,583 521.5,594 529.5,595 537.5,590 545.5,588 553.5,603 561.5,602 569.5,604 577.5,605 585.5,605 593.5,604 601.5,610 609.5,594 617.5,594 625.5,598 633.5,592 641.5,591 649.5,593 657.5,598 665.5,594 673.5,594 681.5,594 689.5,600 697.5,590 705.5,564 713.5,562 721.5,562 729.5,550 737.5,554 745.5,551 753.5,561 761.5,550 769.5,549 777.5,548 785.5,543 793.5,548 801.5,552 809.5,549 817.5,547 825.5,546 833.5,525 841.5,534 849.5,562 857.5,560 865.5,552 873.5,550 881.5,552 889.5,554 897.5,555 905.5,542 913.5,547 921.5,545 929.5,543 937.5,542 945.5,543 953.5,546 961.5,542 969.5,550 977.5,552 985.5,555 993.5,556 1001.5,574 1009.5,570 1017.5,560 1025.5,552 1033.5,550 1041.5,559 1049.5,574 1057.5,574 1065.5,570 1073.5,573 1081.5,574 1089.5,575" fill="none" stroke="#FFFF00" stroke-width="2" stroke-linejoin="round" shape-rendering="crispEdges"/>
<polyline points="9.5,647.5 17.5,647.5 25.5,634.5 33.5,639.5 41.5,643.5 49.5,642.5 57.5,652.5 65.5,652.5 73.5,643.5 81.5,651.5 89.5,650.5 97.5,645.5 105.5,640.5 113.5,636.5 121.5,635.5 129.5,633.5 137.5,630.5 145.5,633.5 153.5,636.5 161.5,644.5 169.5,639.5 177.5,642.5 185.5,641.5 193.5,639.5 201.5,632.5 209.5,629.5 217.5,620.5 225.5,620.5 233.5,618.5 241.5,604.5 249.5,600.5 257.5,592.5 265.5,590.5 273.5,590.5 281.5,592.5 289.5,601.5 297.5,600.5 305.5,591.5 313.5,591.5 321.5,588.5 329.5,590.5 337.5,583.5 345.5,581.5 353.5,582.5 361.5,587.5 369.5,591.5 377.5,593.5 385.5,597.5 393.5,598.5 401.5,598.5 409.5,616.5 417.5,620.5 425.5,623.5 433.5,626.5 441.5,617.5 449.5,608.5 457.5,614.5 465.5,607.5 473.5,608.5 481.5,605.5 489.5,595.5 497.5,594.5 505.5,585.5 513.5,584.5 521.5,594.5 529.5,595.5 537.5,591.5 545.5,588.5 553.5,603.5 561.5,602.5 569.5,604.5 577.5,605.5 585.5,605.5 593.5,604.5 601.5,610.5 609.5,595.5 617.5,594.5 625.5,597.5 633.5,593.5 641.5,592.5 649.5,593.5 657.5,598.5 665.5,595.5 673.5,595.5 681.5,594.5 689.5,600.5 697.5,590.5 705.5,565.5 713.5,563.5 721.5,562.5 729.5,550.5 737.5,554.5 745.5,552.5 753.5,561.5 761.5,550.5 769.5,550.5 777.5,548.5 785.5,544.5 793.5,548.5 801.5,551.5 809.5,550.5 817.5,548.5 825.5,547.5 833.5,525.5 841.5,534.5 849.5,562.5 857.5,560.5 865.5,552.5 873.5,551.5 881.5,552.5 889.5,554.5 897.5,555.5 905.5,542.5 913.5,547.5 921.5,546.5 929.5,544.5 937.5,543.5 945.5,544.5 953.5,546.5 961.5,543.5 969.5,549.5 977.5,552.5 985.5,555.5 993.5,556.5 1001.5,574.5 1009.5,570.5 1017.5,560.5 1025.5,552.5 1033.5,551.5 1041.5,558.5 1049.5,574.5 1057.5,574.5 1065.5,571.5 1073.5,573.5 1081.5,574.5 1089.5,575.5" fill="none" stroke="#FFA500" stroke-width="1" stroke-linejoin="round" shape-rendering="crispEdges"/>
<polyline points="9.5,648.5 17.5,648.5 25.5,635.5 33.5,641.5 41.5,644.5 49.5,643.5 57.5,652.5 65.5,653.5 73.5,644.5 81.5,653.5 89.5,651.5 97.5,645.5 105.5,640.5 113.5,637.5 121.5,636.5 129.5,633.5 137.5,630.5 145.5,634.5 153.5,638.5 161.5,646.5 169.5,639.5 177.5,642.5 185.5,642.5 193.5,640.5 201.5,632.5 209.5,629.5 217.5,620.5 225.5,621.5 233.5,619.5 241.5,605.5 249.5,600.5 257.5,593.5 265.5,590.5 273.5,591.5 281.5,594.5 289.5,602.5 297.5,601.5 305.5,593.5 313.5,590.5 321.5,589.5 329.5,592.5 337.5,584.5 345.5,581.5 353.5,583.5 361.5,589.5 369.5,592.5 377.5,592.5 385.5,597.5 393.5,598.5 401.5,598.5 409.5,616.5 417.5,621.5 425.5,625.5 433.5,626.5 441.5,618.5 449.5,608.5 457.5,615.5 465.5,608.5 473.5,609.5 481.5,607.5 489.5,595.5 497.5,595.5 505.5,586.5 513.5,584.5 521.5,596.5 529.5,595.5 537.5,592.5 545.5,589.5 553.5,604.5 561.5,603.5 569.5,605.5 577.5,605.5 585.5,606.5 593.5,605.5 601.5,610.5 609.5,595.5 617.5,595.5 625.5,599.5 633.5,592.5 641.5,592.5 649.5,593.5 657.5,599.5 665.5,596.5 673.5,595.5 681.5,594.5 689.5,601.5 697.5,592.5 705.5,567.5 713.5,563.5 721.5,563.5 729.5,552.5 737.5,555.5 745.5,551.5 753.5,561.5 761.5,552.5 769.5,550.5 777.5,549.5 785.5,544.5 793.5,548.5 801.5,552.5 809.5,550.5 817.5,548.5 825.5,548.5 833.5,526.5 841.5,535.5 849.5,563.5 857.5,561.5 865.5,553.5 873.5,551.5 881.5,554.5 889.5,556.5 897.5,556.5 905.5,543.5 913.5,548.5 921.5,546.5 929.5,544.5 937.5,544.5 945.5,544.5 953.5,547.5 961.5,543.5 969.5,551.5 977.5,553.5 985.5,555.5 993.5,556.5 1001.5,575.5 1009.5,572.5 1017.5,562.5 1025.5,553.5 1033.5,552.5 1041.5,560.5 1049.5,575.5 1057.5,575.5 1065.5,570.5 1073.5,574.5 1081.5,575.5 1089.5,576.5" fill="none" stroke="#FF0000" stroke-width="1" stroke-linejoin="round" shape-rendering="crispEdges"/>
<polyline points="9.5,661 17.5,661 25.5,653 33.5,650 41.5,649 49.5,649 57.5,650 65.5,647 73.5,647 81.5,633 89.5,641 97.5,643 105.5,643 113.5,653 121.5,653 129.5,644 137.5,652 145.5,649 153.5,646 161.5,640 169.5,636 177.5,634 185.5,633 193.5,635 201.5,637 209.5,645 217.5,639 225.5,642 233.5,640 241.5,640 249.5,631 257.5,629 265.5,620 273.5,621 281.5,618 289.5,605 297.5,600 305.5,592 313.5,589 321.5,591 329.5,601 337.5,599 345.5,600 353.5,591 361.5,591 369.5,587 377.5,590 385.5,583 393.5,581 401.5,583 409.5,589 417.5,591 425.5,589 433.5,596 441.5,598 449.5,616 457.5,620 465.5,622 473.5,626 481.5,617 489.5,607 497.5,615 505.5,607 513.5,609 521.5,605 529.5,595 537.5,593 545.5,585 553.5,583 561.5,595 569.5,596 577.5,590 585.5,587 593.5,604 601.5,603 609.5,604 617.5,605 625.5,605 633.5,603 641.5,611 649.5,594 657.5,593 665.5,593 673.5,591 681.5,592 689.5,598 697.5,593 705.5,593 713.5,592 721.5,600 729.5,591 737.5,564 745.5,562 753.5,562 761.5,550 769.5,553 777.5,551 785.5,561 793.5,551 801.5,549 809.5,547 817.5,543 825.5,547 833.5,552 841.5,549 849.5,547 857.5,547 865.5,524 873.5,533 881.5,562 889.5,560 897.5,551 905.5,550 913.5,554 921.5,555 929.5,542 937.5,547 945.5,545 953.5,543 961.5,542 969.5,543 977.5,547 985.5,542 993.5,550 1001.5,552 1009.5,555 1017.5,555 1025.5,574 1033.5,569 1041.5,559 1049.5,551 1057.5,550 1065.5,558 1073.5,575 1081.5,574 1089.5,569" fill="none" stroke="#FF00FF" stroke-width="2.4" stroke-linejoin="round" shape-rendering="crispEdges"/>
</svg>
<g shape-rendering="crispEdges" fill="none" stroke="#FFFFFF">
<path d="M8.5 31 V505.5 H1094.5 V31.5 H8"/>
<path d="M8.5 507 V669.5 H1094.5 V507.5 H8"/>
<line x1="1095" y1="36.5" x2="1097" y2="36.5"/>
<line x1="1095" y1="69.5" x2="1097" y2="69.5"/>
<line x1="1095" y1="103.5" x2="1097" y2="103.5"/>
<line x1="1095" y1="136.5" x2="1097" y2="136.5"/>
<line x1="1095" y1="169.5" x2="1097" y2="169.5"/>
<line x1="1095" y1="202.5" x2="1097" y2="202.5"/>
<line x1="1095" y1="235.5" x2="1097" y2="235.5"/>
<line x1="1095" y1="269.5" x2="1097" y2="269.5"/>
<line x1="1095" y1="302.5" x2="1097" y2="302.5"/>
<line x1="1095" y1="335.5" x2="1097" y2="335.5"/>
<line x1="1095" y1="368.5" x2="1097" y2="368.5"/>
<line x1="1095" y1="401.5" x2="1097" y2="401.5"/>
<line x1="1095" y1="434.5" x2="1097" y2="434.5"/>
<line x1="1095" y1="468.5" x2="1097" y2="468.5"/>
<line x1="1095" y1="501.5" x2="1097" y2="501.5"/>
<line x1="1095" y1="509.5" x2="1097" y2="509.5"/>
<line x1="1095" y1="668.5" x2="1097" y2="668.5"/>
<line x1="9.5" y1="670" x2="9.5" y2="673"/>
<line x1="73.5" y1="670" x2="73.5" y2="673"/>
<line x1="137.5" y1="670" x2="137.5" y2="673"/>
<line x1="201.5" y1="670" x2="201.5" y2="673"/>
<line x1="265.5" y1="670" x2="265.5" y2="673"/>
<line x1="329.5" y1="670" x2="329.5" y2="673"/>
<line x1="393.5" y1="670" x2="393.5" y2="673"/>
<line x1="457.5" y1="670" x2="457.5" y2="673"/>
<line x1="521.5" y1="670" x2="521.5" y2="673"/>
<line x1="585.5" y1="670" x2="585.5" y2="673"/>
<line x1="649.5" y1="670" x2="649.5" y2="673"/>
<line x1="713.5" y1="670" x2="713.5" y2="673"/>
<line x1="777.5" y1="670" x2="777.5" y2="673"/>
<line x1="841.5" y1="670" x2="841.5" y2="673"/>
<line x1="905.5" y1="670" x2="905.5" y2="673"/>
<line x1="969.5" y1="670" x2="969.5" y2="673"/>
<line x1="1033.5" y1="670" x2="1033.5" y2="673"/>
</g>
<g font-family="'Liberation Sans', Arial, sans-serif" font-size="9.33px" fill="#FFFFFF">
<text x="1100.3" y="39" letter-spacing="-0.15">1.4985</text>
<text x="1100.3" y="72" letter-spacing="-0.15">1.4940</text>
<text x="1100.3" y="106" letter-spacing="-0.15">1.4895</text>
<text x="1100.3" y="139" letter-spacing="-0.15">1.4850</text>
<text x="1100.3" y="172" letter-spacing="-0.15">1.4805</text>
<text x="1100.3" y="205" letter-spacing="-0.15">1.4760</text>
<text x="1100.3" y="238" letter-spacing="-0.15">1.4715</text>
<text x="1100.3" y="272" letter-spacing="-0.15">1.4670</text>
<text x="1100.3" y="305" letter-spacing="-0.15">1.4625</text>
<text x="1100.3" y="338" letter-spacing="-0.15">1.4580</text>
<text x="1100.3" y="371" letter-spacing="-0.15">1.4535</text>
<text x="1100.3" y="404" letter-spacing="-0.15">1.4490</text>
<text x="1100.3" y="437" letter-spacing="-0.15">1.4445</text>
<text x="1100.3" y="471" letter-spacing="-0.15">1.4400</text>
<text x="1100.3" y="504" letter-spacing="-0.15">1.4355</text>
<text x="1098.3" y="518" letter-spacing="-0.15">1.5006</text>
<text x="1098.5" y="666" letter-spacing="-0.15">1.4358</text>
<text x="8" y="682" word-spacing="0.35">30 Oct 2007</text>
<text x="72" y="682" word-spacing="0.35">31 Oct 12:00</text>
<text x="136" y="682" word-spacing="0.35">1 Nov 20:00</text>
<text x="200" y="682" word-spacing="0.35">5 Nov 04:00</text>
<text x="264" y="682" word-spacing="0.35">6 Nov 12:00</text>
<text x="328" y="682" word-spacing="0.35">7 Nov 20:00</text>
<text x="392" y="682" word-spacing="0.35">9 Nov 04:00</text>
<text x="456" y="682" word-spacing="0.35">12 Nov 12:00</text>
<text x="520" y="682" word-spacing="0.35">13 Nov 20:00</text>
<text x="584" y="682" word-spacing="0.35">15 Nov 04:00</text>
<text x="648" y="682" word-spacing="0.35">16 Nov 12:00</text>
<text x="712" y="682" word-spacing="0.35">19 Nov 20:00</text>
<text x="776" y="682" word-spacing="0.35">21 Nov 04:00</text>
<text x="840" y="682" word-spacing="0.35">22 Nov 12:00</text>
<text x="904" y="682" word-spacing="0.35">23 Nov 20:00</text>
<text x="968" y="682" word-spacing="0.35">27 Nov 04:00</text>
<text x="1032" y="682" word-spacing="0.35">28 Nov 12:00</text>
<text x="13" y="521" letter-spacing="-0.05">EURUSD Cross 1.4502 1.4503 1.4497 1.4504 1.4502 1.4493</text>
</g>
<rect x="1096" y="386" width="36" height="11" fill="#FFFFFF" shape-rendering="crispEdges"/>
<text x="1100.3" y="394.6" font-family="'Liberation Sans', Arial, sans-serif" font-size="9.33px" fill="#000000" letter-spacing="-0.15">1.4502</text>
 </svg>
</div>
</body></html>
